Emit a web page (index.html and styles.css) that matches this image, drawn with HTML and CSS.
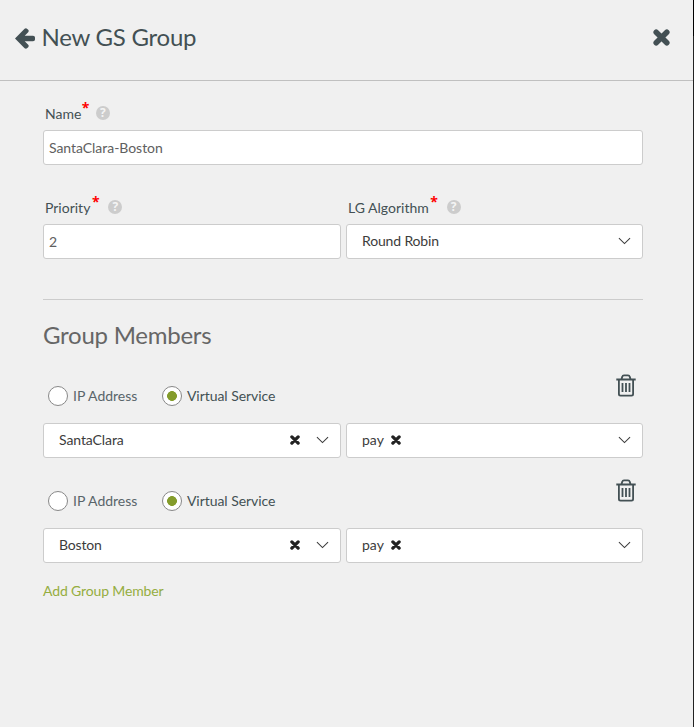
FILE: index.html
```html
<!DOCTYPE html>
<html lang="en">
<head>
<meta charset="utf-8">
<title>New GS Group</title>
<link rel="stylesheet" href="styles.css">
</head>
<body>
<svg class="defs" aria-hidden="true">
  <symbol id="cross" viewBox="0 0 16 16"><path d="M3 3 13 13M13 3 3 13" fill="none" stroke="currentColor" stroke-width="5.2" stroke-linecap="round"/></symbol>
  <symbol id="chevron" viewBox="0 0 14 8"><path d="M1 1 7 6.8 13 1" fill="none" stroke="currentColor" stroke-width="1.15"/></symbol>
  <symbol id="trash" viewBox="0 0 20 23"><path d="M.3 5.5H19.7M5.5 5 6.2 2.9Q6.6 1.3 8 1.3H12Q13.4 1.3 13.8 2.9L14.5 5M2.9 5.5V20Q2.9 21.6 4.5 21.6H15.5Q17.1 21.6 17.1 20V5.5M6.5 9V18M10 9V18M13.5 9V18" fill="none" stroke="currentColor" stroke-width="1.8"/></symbol>
</svg>
<main class="panel">
  <header class="header">
    <svg class="back" viewBox="0 0 20 21"><path d="M0 10.5 9.6.7Q11 -.3 12.3.9L13.2 1.8Q14.2 3 13.2 4.2L9.7 7.8H18Q20 7.8 20 9.6V11.4Q20 13.2 18 13.2H9.7L13.2 16.8Q14.2 18 13.2 19.2L12.3 20.1Q11 21.3 9.6 20.3Z" fill="currentColor"/></svg>
    <h1 class="title">New GS Group</h1>
    <svg class="close"><use href="#cross"/></svg>
  </header>
  <form class="form">
    <div class="field name-field">
      <div class="label"><span class="t-name">Name</span><span class="star">*</span><span class="help">?</span></div>
      <div class="box input"><span class="t-value">SantaClara-Boston</span></div>
    </div>
    <div class="row settings">
      <div class="field">
        <div class="label"><span class="t-priority">Priority</span><span class="star">*</span><span class="help">?</span></div>
        <div class="box input">2</div>
      </div>
      <div class="field">
        <div class="label"><span class="t-algo">LG Algorithm</span><span class="star">*</span><span class="help">?</span></div>
        <div class="box select"><span class="t-robin">Round Robin</span><svg class="chevron"><use href="#chevron"/></svg></div>
      </div>
    </div>
    <h2 class="section">Group Members</h2>
    <div class="member">
      <div class="choices">
        <span class="radio"></span><span class="t-ip">IP Address</span>
        <span class="radio checked"></span><span class="t-vs">Virtual Service</span>
        <svg class="trash"><use href="#trash"/></svg>
      </div>
      <div class="row">
        <div class="box select site"><span class="t-clara">SantaClara</span><svg class="clear"><use href="#cross"/></svg><svg class="chevron"><use href="#chevron"/></svg></div>
        <div class="box select"><span class="t-pay">pay</span><svg class="clear tag"><use href="#cross"/></svg><svg class="chevron"><use href="#chevron"/></svg></div>
      </div>
    </div>
    <div class="member">
      <div class="choices">
        <span class="radio"></span><span class="t-ip">IP Address</span>
        <span class="radio checked"></span><span class="t-vs">Virtual Service</span>
        <svg class="trash"><use href="#trash"/></svg>
      </div>
      <div class="row">
        <div class="box select site"><span class="t-boston">Boston</span><svg class="clear"><use href="#cross"/></svg><svg class="chevron"><use href="#chevron"/></svg></div>
        <div class="box select"><span class="t-pay">pay</span><svg class="clear tag"><use href="#cross"/></svg><svg class="chevron"><use href="#chevron"/></svg></div>
      </div>
    </div>
    <a class="add">Add Group Member</a>
  </form>
</main>
</body>
</html>
```
FILE: styles.css
```css
* { box-sizing: border-box; }
body { margin: 0; background: #f0f0f0; font: 14px/20px Lato, "Open Sans", sans-serif; color: #435054; }
svg { display: block; flex: none; }
.defs { position: absolute; width: 0; height: 0; }
.panel { height: 727px; padding-right: 1px; overflow: hidden; background: linear-gradient(#000 36px, #222 36px) right / 1px 100% no-repeat; }
.header { display: flex; align-items: center; height: 81px; padding: 0 23px 4px 15px; border-bottom: 1px solid #c0c0c0; }
.back { width: 20px; height: 21px; }
.title { margin: -2px 0 0 6.5px; font-size: 24px; line-height: 30px; font-weight: 400; letter-spacing: -.25px; }
.close { width: 17px; height: 17px; margin: -1px 0 0 auto; }
.form { width: 600px; margin-left: 43px; padding-top: 22px; }
.label { display: flex; align-items: center; height: 22px; padding-left: 2px; margin-bottom: 5px; white-space: nowrap; }
.star { width: 8px; margin: -13px 0 0 1.5px; color: #f00; font: bold 14px/18px "Open Sans", sans-serif; }
.help { width: 14px; height: 14px; margin: -3px 0 0 8.5px; border-radius: 50%; background: #ccc; color: #f4f4f4; font: bold 12px/14px "Open Sans", sans-serif; text-align: center; }
.name-field .star { margin-left: .5px; }
.name-field .help { margin-left: 6px; }
.box { display: flex; align-items: center; height: 35px; border: 1px solid #ccc; border-radius: 3px; background: #fff; white-space: nowrap; }
.input { padding: 1px 5px 0; color: #606060; }
.t-value { letter-spacing: -.04px; }
.select { padding: 0 11px 1px 15px; color: #3c3c3c; }
.t-robin { letter-spacing: -.15px; }
.row { display: grid; grid-template-columns: 298px 297px; column-gap: 5px; }
.settings { margin-top: 32px; padding-bottom: 40px; border-bottom: 1px solid #ccc; }
.chevron { width: 13px; height: 8px; margin-left: auto; }
.section { margin: 20px 0 33px; font-size: 24px; line-height: 30px; font-weight: 400; color: #666; letter-spacing: -.25px; }
.member { margin-bottom: 30px; }
.choices { display: flex; align-items: center; height: 25px; margin-bottom: 15px; padding: 0 7px 0 5px; }
.radio { width: 20px; height: 20px; margin-right: 5px; border: 1px solid #888; border-radius: 50%; background: #fff; }
.checked { margin: 0 4.5px 0 25px; background: radial-gradient(circle, #849c2c 4.6px, #fff 5.2px); }
.t-ip { color: #59656a; }
.t-vs { letter-spacing: -.04px; }
.trash { width: 20px; height: 23px; margin: -21px 0 0 auto; }
.clear { width: 10px; height: 10px; margin-left: auto; color: #222; }
.site .chevron { margin-left: 16px; }
.clear.tag { margin-left: 7px; }
.t-clara { letter-spacing: -.08px; }
.t-boston { letter-spacing: -.15px; }
.add { display: block; margin-top: -12px; color: #95ad40; letter-spacing: -.14px; }
```
